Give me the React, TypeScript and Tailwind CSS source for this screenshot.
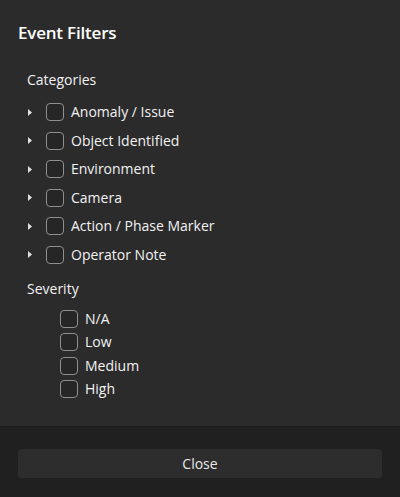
import { useState } from "react";

const categories = [
  "Anomaly / Issue",
  "Object Identified",
  "Environment",
  "Camera",
  "Action / Phase Marker",
  "Operator Note",
];

const severities = ["N/A", "Low", "Medium", "High"];

function Box({ checked, onClick }: { checked: boolean; onClick: () => void }) {
  return (
    <button
      onClick={onClick}
      className={`w-[18px] h-[18px] rounded-[4px] border flex items-center justify-center shrink-0 ${
        checked ? "bg-[#60cdff] border-[#60cdff]" : "bg-[#262626] border-[#8f8f8f]"
      }`}
    >
      {checked && (
        <svg width="12" height="12" viewBox="0 0 12 12" fill="none">
          <path d="M2 6.5l2.5 2.5L10 3.5" stroke="#000" strokeWidth="1.4" strokeLinecap="round" strokeLinejoin="round" />
        </svg>
      )}
    </button>
  );
}

export default function App() {
  const [cats, setCats] = useState<Record<string, boolean>>({});
  const [sev, setSev] = useState<Record<string, boolean>>({});

  return (
    <div
      className="w-[400px] h-[497px] bg-[#2b2b2b] text-white flex flex-col overflow-hidden"
      style={{ fontFamily: '"Open Sans", "Noto Sans", Arial, sans-serif' }}
    >
      <div className="flex-1 px-[18px] pt-[21px]">
        <h1 className="text-[17px] font-semibold leading-[24px] tracking-[-0.2px]">Event Filters</h1>

        <div className="pl-[9px] mt-[25px]">
          <div className="text-[14px] leading-[20px] text-[#f2f2f2]">Categories</div>
          <div className="flex flex-col mt-[8px]">
            {categories.map((c) => (
              <div key={c} className="h-[28.5px] flex items-center">
                <svg width="4" height="7" viewBox="0 0 4 7" className="ml-[1px]">
                  <path d="M0 0L4 3.5L0 7Z" fill="#e0e0e0" />
                </svg>
                <div className="ml-[14px]">
                  <Box checked={!!cats[c]} onClick={() => setCats({ ...cats, [c]: !cats[c] })} />
                </div>
                <span className="ml-[7px] text-[14px] leading-[20px] text-[#f2f2f2]">{c}</span>
              </div>
            ))}
          </div>

          <div className="text-[14px] leading-[20px] text-[#f2f2f2] mt-[10px]">Severity</div>
          <div className="flex flex-col mt-[8px] pl-[33px]">
            {severities.map((s) => (
              <div key={s} className="h-[23.5px] flex items-center">
                <Box checked={!!sev[s]} onClick={() => setSev({ ...sev, [s]: !sev[s] })} />
                <span className="ml-[7px] text-[14px] leading-[20px] text-[#f2f2f2]">{s}</span>
              </div>
            ))}
          </div>
        </div>
      </div>

      <div className="h-[71px] bg-[#202020] px-[18px] pt-[22px] border-t border-[#1c1c1c]">
        <button className="w-full h-[29px] rounded-[4px] bg-[#2d2d2d] text-[14px] text-[#e8e8e8]">Close</button>
      </div>
    </div>
  );
}
